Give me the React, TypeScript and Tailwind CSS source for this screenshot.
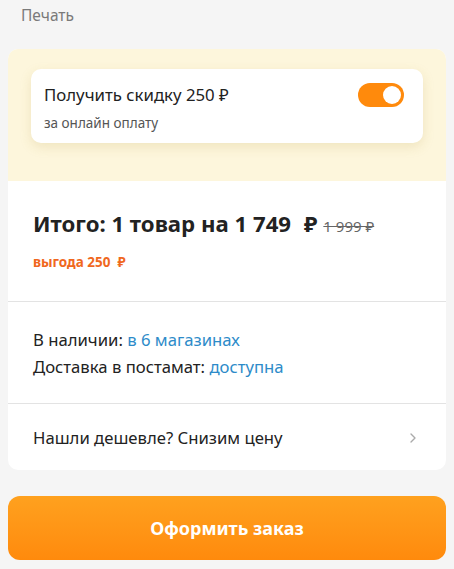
import { ChevronRight } from 'lucide-react';

export default function App() {
  return (
    <div
      className="min-h-[569px] bg-[#f5f5f5] px-2 pt-[4px] pb-[9px]"
      style={{ fontFamily: '"Noto Sans", "Liberation Sans", sans-serif' }}
    >
      <div className="px-[13px] text-[15.5px] leading-[22px] text-[#7a7a7a]">Печать</div>

      <div className="mt-[23px] overflow-hidden rounded-[10px] bg-white">
        {/* Discount */}
        <div className="bg-[#fdf6dc] px-[23px] pt-5 pb-[38px]">
          <div className="flex items-start justify-between rounded-[10px] bg-white pl-[13px] pr-[19px] pt-[14px] pb-[11px] shadow-[0_4px_12px_rgba(180,150,60,0.18)]">
            <div>
              <div className="text-[16.8px] leading-[24px] text-[#222]">Получить скидку 250 ₽</div>
              <div className="mt-[7px] text-[13.5px] leading-[18px] text-[#555]">за онлайн оплату</div>
            </div>
            <div className="flex h-[24px] w-[46px] items-center justify-end rounded-full bg-[#ff8a0c] px-[3px]">
              <div className="h-[18px] w-[18px] rounded-full bg-white" />
            </div>
          </div>
        </div>

        {/* Total */}
        <div className="border-b border-[#e3e3e3] px-[25px] pt-[28px] pb-[30px]">
          <div className="flex items-baseline">
            <span className="text-[22.2px] font-bold leading-[30px] text-[#222]">Итого: 1 товар на 1 749</span>
            <span className="ml-[13px] text-[22.2px] font-bold leading-[30px] text-[#222]">₽</span>
            <span className="ml-[6px] text-[15px] text-[#666] line-through">1 999 ₽</span>
          </div>
          <div className="mt-[14px] text-[13.5px] font-bold leading-[18px] text-[#f0681e]">выгода 250&nbsp;&nbsp;₽</div>
        </div>

        {/* Availability */}
        <div className="border-b border-[#e3e3e3] px-[25px] pt-[24px] pb-[23px] text-[16.7px] leading-[27px] text-[#222]">
          <div>
            В наличии: <span className="text-[#2d8bc9]">в 6 магазинах</span>
          </div>
          <div>
            Доставка в постамат: <span className="text-[#2d8bc9]">доступна</span>
          </div>
        </div>

        {/* Cheaper */}
        <div className="flex items-center justify-between px-[25px] pt-[21px] pb-[20px]">
          <span className="text-[16.7px] leading-[25px] text-[#222]">Нашли дешевле? Снизим цену</span>
          <ChevronRight className="h-[16px] w-[16px] text-[#aaa]" strokeWidth={2} />
        </div>
      </div>

      <button className="mt-[26px] flex h-[64px] w-full items-center justify-center rounded-[12px] bg-gradient-to-b from-[#ffa11e] to-[#ff8a0c] text-[18px] font-bold text-white">
        Оформить заказ
      </button>
    </div>
  );
}
